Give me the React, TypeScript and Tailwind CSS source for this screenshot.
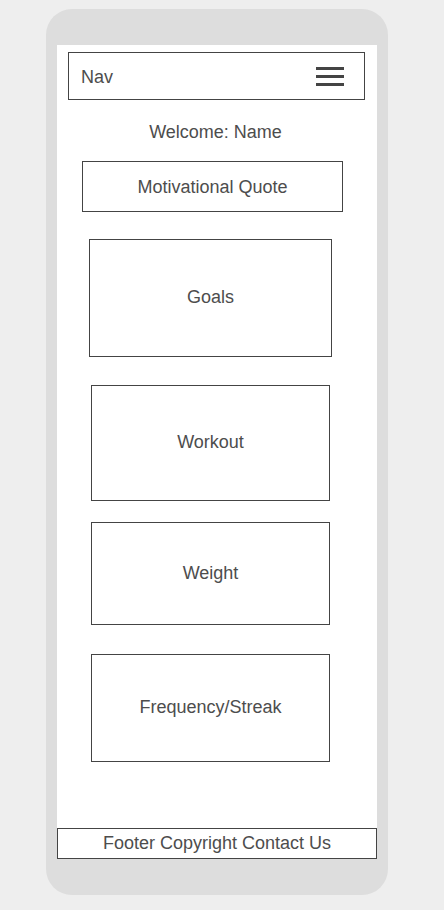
import React from "react";

const font = { fontFamily: '"Liberation Sans", Arial, sans-serif' };

const Card = ({
  label,
  className,
}: {
  label: string;
  className: string;
}) => (
  <div
    className={`flex items-center justify-center border border-[#444444] text-[18px] leading-[21px] text-[#4d4d4d] ${className}`}
  >
    {label}
  </div>
);

const App = () => {
  return (
    <div className="min-h-screen bg-[#eeeeee] pt-[9px]" style={font}>
      <div className="ml-[46px] h-[886px] w-[342px] rounded-[26px] bg-[#dddddd] px-[11px] pt-[36px]">
        <div className="flex h-[814px] w-[320px] flex-col bg-white">
          {/* nav */}
          <div className="ml-[11px] mt-[7px] flex h-[48px] w-[297px] items-center justify-between border border-[#444444] pl-[12px] pr-[20px]">
            <span className="pt-[2px] text-[18px] leading-[21px] text-[#4d4d4d]">Nav</span>
            <div className="flex w-[28px] flex-col gap-[5px]">
              <span className="h-[3px] w-full bg-[#444444]" />
              <span className="h-[3px] w-full bg-[#444444]" />
              <span className="h-[3px] w-full bg-[#444444]" />
            </div>
          </div>

          <div className="mt-[22px] pr-[3px] text-center text-[18px] leading-[21px] text-[#4d4d4d]">
            Welcome: Name
          </div>

          <Card label="Motivational Quote" className="ml-[25px] mt-[18px] h-[51px] w-[261px] pt-[2px]" />

          <Card label="Goals" className="ml-[32px] mt-[27px] h-[118px] w-[243px] pb-[2px]" />
          <Card label="Workout" className="ml-[34px] mt-[28px] h-[116px] w-[239px] pb-[2px]" />
          <Card label="Weight" className="ml-[34px] mt-[21px] h-[103px] w-[239px]" />
          <Card label="Frequency/Streak" className="ml-[34px] mt-[29px] h-[108px] w-[239px] pb-[2px]" />

          {/* footer */}
          <div className="mt-auto flex h-[31px] w-full items-center justify-center border border-[#444444] text-[18px] leading-[21px] text-[#4d4d4d]">
            Footer Copyright Contact Us
          </div>
        </div>
      </div>
    </div>
  );
};

export default App;
